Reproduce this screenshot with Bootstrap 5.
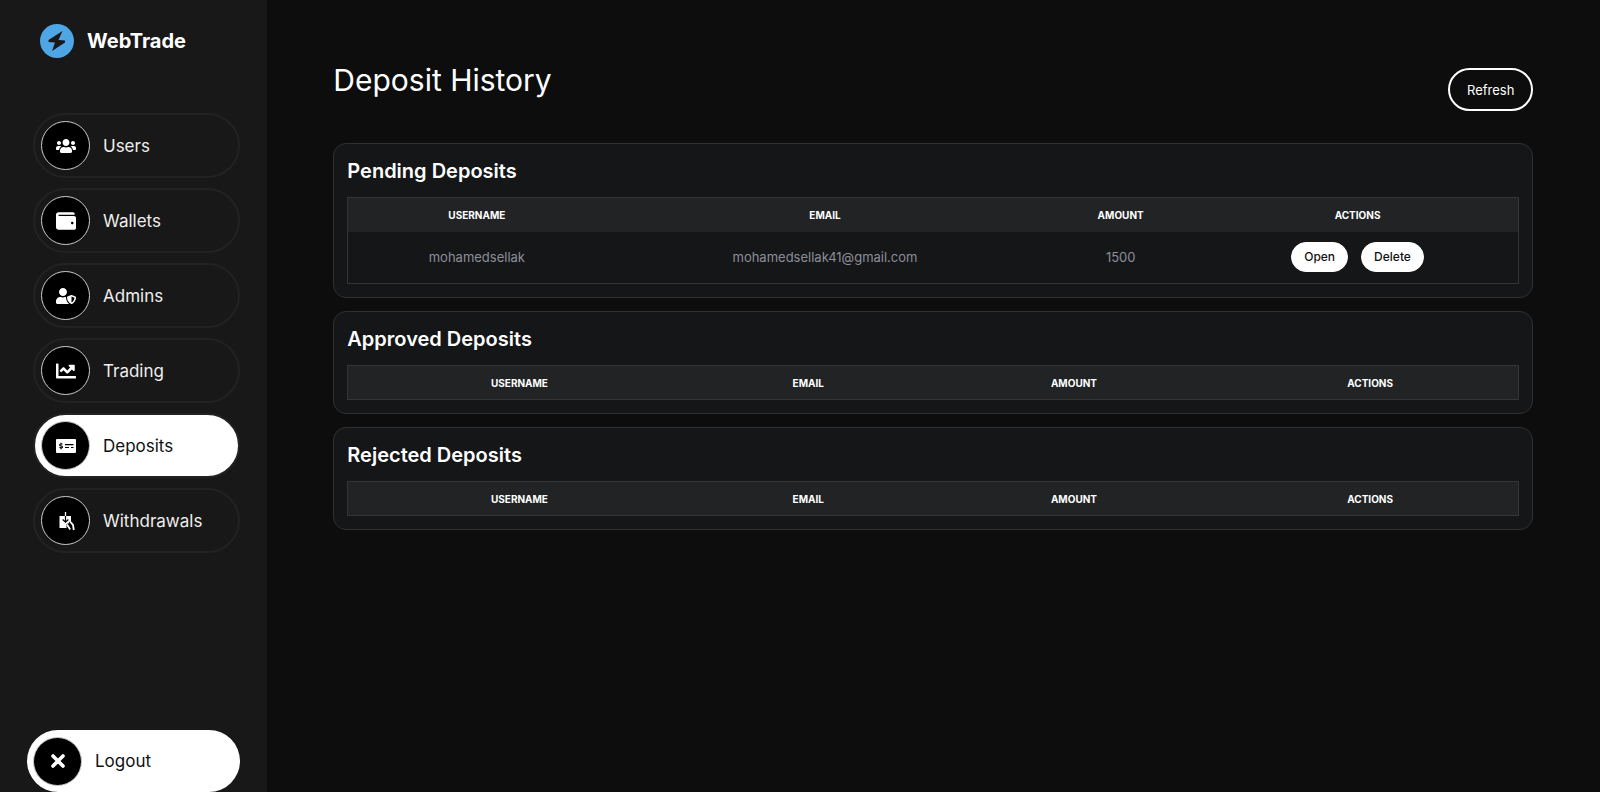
<!DOCTYPE html>
<html lang="en">
<head>
<meta charset="utf-8">
<meta name="viewport" content="width=device-width, initial-scale=1">
<title>WebTrade - Deposit History</title>
<link rel="stylesheet" href="https://cdn.jsdelivr.net/npm/bootstrap@5.3.0/dist/css/bootstrap.min.css">
<style>
body{background:#0d0d0d;color:#fff;font-family:Inter,sans-serif}
.sidebar{background:#181818;padding:23px 27px 0}
.brand{padding-left:13px;gap:13px;font-size:20px;font-weight:700;line-height:36px;margin-bottom:54px}
.side-list{padding-left:6px;gap:10px}
.side-link{display:flex;align-items:center;gap:13px;height:65px;padding:0 6px;border:2px solid #222;border-radius:33px;color:#eee;font-size:17px;line-height:26px;text-decoration:none}
.side-link.active{background:#fff;color:#111}
.side-icon{display:flex;align-items:center;justify-content:center;flex:none;width:49px;height:49px;border-radius:50%;background:#000;border:1px solid #ccc;color:#fff}
.side-icon svg{width:20px;height:20px;fill:currentColor}
.logout{width:100%;height:62px;border:0;background:#fff;color:#111;text-align:left}
.main-inner{padding:68px 5% 40px}
.page-title{font-size:30px;font-weight:400;line-height:24px;margin:0}
.btn-refresh{--bs-btn-color:#fff;--bs-btn-border-color:#fff;--bs-btn-border-width:2px;--bs-btn-border-radius:22px;--bs-btn-font-size:13px;--bs-btn-padding-x:17px;line-height:20px;height:43px}
.panel-stack,.actions{gap:13px}
.panel{background:#151618;border:1px solid #303030;border-radius:13px;padding:13px}
.panel h2{font-size:20px;font-weight:600;line-height:28px;margin:0 0 12px}
.history{width:100%;border:1px solid #333536;border-collapse:collapse;text-align:center;font-size:13px}
.history th,.history td{padding:0 13px}
.history th{height:34px;padding-top:2px;background:#222325;font-size:10px;font-weight:700;text-transform:uppercase}
.history td{height:52px;color:#8b8f98}
.col-user{width:22%}
.col-email{width:37.5%}
.col-amount{width:13%}
.col-actions{width:27.5%}
.btn-pill{--bs-btn-color:#111;--bs-btn-bg:#fff;--bs-btn-border-color:#fff;--bs-btn-border-radius:16px;--bs-btn-font-size:12px;--bs-btn-font-weight:500;--bs-btn-padding-x:12px;--bs-btn-padding-y:5px;line-height:18px}
</style>
</head>
<body>
<div class="container-fluid p-0">
<div class="row g-0 min-vh-100">
<aside class="col-2 sidebar d-flex flex-column">
  <div class="brand d-flex align-items-center">
    <svg width="34" height="34" viewBox="0 0 34 34" aria-hidden="true"><circle cx="17" cy="17" r="17" fill="#4ea6e6"/><path d="M22.500 7 8.500 16v2l6.500.5L12 27l13-8.500v-2l-6.500-.5z" fill="#181818"/></svg>
    <span>WebTrade</span>
  </div>
  <nav class="side-list d-flex flex-column">
    <a class="side-link" href="#"><span class="side-icon"><svg viewBox="0 0 640 512"><path d="M96 224c35.300 0 64-28.700 64-64s-28.700-64-64-64-64 28.700-64 64 28.700 64 64 64zm448 0c35.300 0 64-28.700 64-64s-28.700-64-64-64-64 28.700-64 64 28.700 64 64 64zm32 32h-64c-17.600 0-33.500 7.100-45.100 18.600 40.300 22.100 68.900 62 75.100 109.400h66c17.700 0 32-14.300 32-32v-32c0-35.300-28.700-64-64-64zm-256 0c61.900 0 112-50.100 112-112S381.900 32 320 32 208 82.100 208 144s50.100 112 112 112zm76.800 32h-8.300c-20.800 10-43.900 16-68.500 16s-47.600-6-68.500-16h-8.300C179.600 288 128 339.600 128 403.200V432c0 26.500 21.500 48 48 48h288c26.500 0 48-21.500 48-48v-28.800c0-63.600-51.600-115.200-115.200-115.200zm-223.700-13.400C161.500 263.100 145.600 256 128 256H64c-35.300 0-64 28.700-64 64v32c0 17.700 14.300 32 32 32h65.900c6.300-47.400 34.900-87.300 75.200-109.400z"/></svg></span>Users</a>
    <a class="side-link" href="#"><span class="side-icon"><svg viewBox="0 0 512 512"><path d="M461.200 128H80c-8.840 0-16-7.160-16-16s7.160-16 16-16h384c8.840 0 16-7.160 16-16 0-26.510-21.490-48-48-48H64C28.650 32 0 60.650 0 96v320c0 35.350 28.650 64 64 64h397.200c28.020 0 50.800-21.530 50.800-48V176c0-26.470-22.780-48-50.800-48zM416 336c-17.670 0-32-14.330-32-32s14.330-32 32-32 32 14.330 32 32-14.330 32-32 32z"/></svg></span>Wallets</a>
    <a class="side-link" href="#"><span class="side-icon"><svg viewBox="0 0 640 512"><path d="M622.300 271.100l-115.200-45c-4.100-1.600-12.600-3.700-22.200 0l-115.200 45c-10.700 4.200-17.700 14-17.700 24.900 0 111.600 68.700 188.800 132.900 213.900 9.600 3.700 18 1.600 22.200 0C558.400 489.900 640 420.500 640 296c0-10.900-7-20.700-17.700-24.900zM496 462.400V273.300l95.500 37.300c-5.600 87.100-60.900 135.400-95.500 151.800zM224 256c70.700 0 128-57.300 128-128S294.700 0 224 0 96 57.300 96 128s57.300 128 128 128zm96 40c0-2.500.8-4.800 1.100-7.200-2.500-.1-4.900-.8-7.500-.8h-16.700c-22.200 10.200-46.900 16-72.900 16s-50.600-5.800-72.900-16h-16.700C60.200 288 0 348.200 0 422.400V464c0 26.500 21.500 48 48 48h352c6.800 0 13.300-1.500 19.200-4-54-42.900-99.200-116.700-99.200-212z"/></svg></span>Admins</a>
    <a class="side-link" href="#"><span class="side-icon"><svg viewBox="0 0 512 512"><path d="M496 384H64V80c0-8.840-7.160-16-16-16H16C7.160 64 0 71.160 0 80v336c0 17.670 14.330 32 32 32h464c8.840 0 16-7.160 16-16v-32c0-8.840-7.160-16-16-16zM464 96H345.940c-21.380 0-32.090 25.850-16.970 40.970l32.400 32.400L288 242.750l-73.370-73.370c-12.500-12.500-32.760-12.500-45.250 0l-68.690 68.690c-6.250 6.250-6.250 16.380 0 22.630l22.620 22.620c6.250 6.250 16.380 6.250 22.630 0L192 237.250l73.370 73.370c12.500 12.500 32.760 12.500 45.250 0l96-96 32.400 32.400c15.120 15.120 40.970 4.410 40.970-16.970V112c.01-8.840-7.150-16-15.990-16z"/></svg></span>Trading</a>
    <a class="side-link active" href="#" aria-current="page"><span class="side-icon"><svg viewBox="0 0 640 512"><rect y="32" width="640" height="448" rx="32"/><path d="M204 206c-20-22-88-22-88 14 0 40 92 20 92 66 0 38-66 38-96 12M160 150v45m0 120v45" fill="none" stroke="#000" stroke-width="38"/><path d="M288 212h272M288 306h128M480 306h80" fill="none" stroke="#000" stroke-width="34"/></svg></span>Deposits</a>
    <a class="side-link" href="#"><span class="side-icon"><svg viewBox="0 0 20 20"><path d="M3.500 5H15v6l-1.500-.5-1 2-2 .5v4h-7z"/><path d="M9.500 5v6M6.700 8.500l2.800 2.700 2.800-2.700" fill="none" stroke="#000" stroke-width="1.200"/><path d="M9.500 1v4" stroke="#fff" stroke-width="1.300"/><path d="M11 13.500l3.200 5M14 10.500l3 3.500.8 5" fill="none" stroke="#fff" stroke-width="1.800"/></svg></span>Withdrawals</a>
  </nav>
  <button type="button" class="side-link logout mt-auto"><span class="side-icon"><svg viewBox="0 0 20 20"><path d="M5 5l10 10M15 5L5 15" stroke="#fff" stroke-width="3.600" stroke-linecap="round"/></svg></span>Logout</button>
</aside>
<main class="col-10">
  <div class="main-inner">
  <header class="d-flex justify-content-between align-items-start mb-4 pb-2">
    <h1 class="page-title">Deposit History</h1>
    <button type="button" class="btn btn-refresh">Refresh</button>
  </header>
  <div class="d-grid panel-stack">
  <section class="panel">
    <h2>Pending Deposits</h2>
    <table class="history">
      <colgroup><col class="col-user"><col class="col-email"><col class="col-amount"><col class="col-actions"></colgroup>
      <thead><tr><th scope="col">Username</th><th scope="col">Email</th><th scope="col">Amount</th><th scope="col">Actions</th></tr></thead>
      <tbody><tr><td>mohamedsellak</td><td>mohamedsellak41@gmail.com</td><td>1500</td><td><div class="actions d-flex justify-content-center"><button type="button" class="btn btn-pill">Open</button><button type="button" class="btn btn-pill">Delete</button></div></td></tr></tbody>
    </table>
  </section>
  <section class="panel">
    <h2>Approved Deposits</h2>
    <table class="history">
      <thead><tr><th scope="col">Username</th><th scope="col">Email</th><th scope="col">Amount</th><th scope="col">Actions</th></tr></thead>
    </table>
  </section>
  <section class="panel">
    <h2>Rejected Deposits</h2>
    <table class="history">
      <thead><tr><th scope="col">Username</th><th scope="col">Email</th><th scope="col">Amount</th><th scope="col">Actions</th></tr></thead>
    </table>
  </section>
  </div>
  </div>
</main>
</div>
</div>
<script src="https://cdn.jsdelivr.net/npm/bootstrap@5.3.0/dist/js/bootstrap.bundle.min.js"></script>
</body>
</html>
